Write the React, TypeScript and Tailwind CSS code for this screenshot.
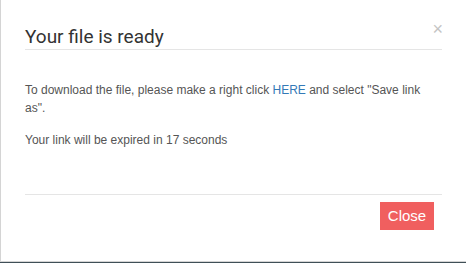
export default function App() {
  return (
    <div className="w-[466px] h-[263px] bg-[#3f4f57] overflow-hidden">
      <div className="relative h-[262px] bg-white border-l border-b border-[#d4d4d4] flex flex-col">
        {/* header */}
        <div className="mx-6 pt-[26px] pb-[1px] border-b border-[#e5e5e5]">
          <h4 className="text-[19px] leading-[22px] text-[#333] font-['Roboto',sans-serif]">Your file is ready</h4>
        </div>
        <button className="absolute right-[23px] top-[20px] text-[18px] leading-none text-[#c4c4c4] font-['Liberation_Sans',sans-serif]">
          ×
        </button>

        {/* body */}
        <div className="mx-6 pt-[31px] text-[12px] leading-[18px] text-[#555] font-['Liberation_Sans',Arial,sans-serif] h-[144px]">
          <p>
            To download the file, please make a right click <a className="text-[#337ab7]">HERE</a> and select "Save link as".
          </p>
          <p className="mt-[14px]">Your link will be expired in 17 seconds</p>
        </div>

        {/* footer */}
        <div className="mx-6 border-t border-[#e5e5e5] flex justify-end pt-[7px] pr-2">
          <button className="w-[54px] h-[28px] bg-[#f05f5f] text-white text-[15px] font-['Liberation_Sans',Arial,sans-serif]">
            Close
          </button>
        </div>
      </div>
    </div>
  );
}
